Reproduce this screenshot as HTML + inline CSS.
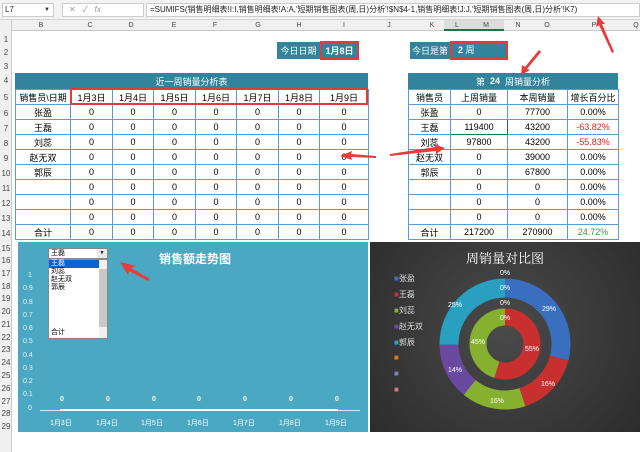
<!DOCTYPE html>
<html><head><meta charset="utf-8"><style>
*{margin:0;padding:0;box-sizing:border-box}
body{width:640px;height:432px;overflow:hidden;background:#fff;position:relative;font-family:"Liberation Sans","Noto Sans CJK SC",sans-serif;font-size:9px;color:#000}
.a{position:absolute}
.c{position:absolute;display:flex;align-items:center;justify-content:center;white-space:nowrap}
table{border-collapse:collapse;position:absolute;table-layout:fixed}
td{border:1px solid #5b9bd5;text-align:center;height:15px;font-size:9px;padding:0;white-space:nowrap;overflow:hidden}
</style></head><body>
<!-- formula bar -->
<div class="a" style="left:0;top:0;width:640px;height:20px;background:#f3f3f3;border-bottom:1px solid #d4d4d4"></div>
<div class="a" style="left:2px;top:3px;width:52px;height:14px;background:#fff;border:1px solid #ccc;font-size:8px;padding-left:2px;line-height:12px;color:#333">L7<span style="position:absolute;right:3px;font-size:6px">▼</span></div>
<div class="a" style="left:62px;top:3px;width:82px;height:14px;background:#fff;border:1px solid #ccc;font-size:8px;color:#999;line-height:12px;padding-left:6px">✕ &nbsp;&nbsp;✓ &nbsp;&nbsp;<i>fx</i></div>
<div class="a" style="left:146px;top:3px;width:494px;height:14px;background:#fff;border:1px solid #ccc;font-size:8px;line-height:12px;padding-left:3px;color:#222;white-space:nowrap;overflow:hidden">=SUMIFS(销售明细表!I:I,销售明细表!A:A,'短期销售图表(周,日)分析'!$N$4-1,销售明细表!J:J,'短期销售图表(周,日)分析'!K7)</div>
<!-- column headers -->
<div class="a" style="left:0;top:20px;width:640px;height:11px;background:#f0f0f0;border-bottom:1px solid #c8c8c8"></div>
<div class="a" style="left:0;top:20px;width:12px;height:432px;background:#f0f0f0;border-right:1px solid #c8c8c8"></div>
<div class="a" style="left:444px;top:20px;width:60px;height:10px;background:#dcdcdc"></div>
<div class="a" style="left:444px;top:29px;width:60px;height:2px;background:#217346"></div>
<div style="font-size:7px;color:#444">
<div class="c" style="left:31px;top:20px;width:20px;height:11px">B</div>
<div class="c" style="left:80px;top:20px;width:20px;height:11px">C</div>
<div class="c" style="left:121px;top:20px;width:20px;height:11px">D</div>
<div class="c" style="left:164px;top:20px;width:20px;height:11px">E</div>
<div class="c" style="left:205px;top:20px;width:20px;height:11px">F</div>
<div class="c" style="left:248px;top:20px;width:20px;height:11px">G</div>
<div class="c" style="left:289px;top:20px;width:20px;height:11px">H</div>
<div class="c" style="left:334px;top:20px;width:20px;height:11px">I</div>
<div class="c" style="left:379px;top:20px;width:20px;height:11px">J</div>
<div class="c" style="left:422px;top:20px;width:20px;height:11px">K</div>
<div class="c" style="left:447px;top:20px;width:20px;height:11px">L</div>
<div class="c" style="left:476px;top:20px;width:20px;height:11px">M</div>
<div class="c" style="left:508px;top:20px;width:20px;height:11px">N</div>
<div class="c" style="left:537px;top:20px;width:20px;height:11px">O</div>
<div class="c" style="left:584px;top:20px;width:20px;height:11px">P</div>
<div class="c" style="left:626px;top:20px;width:20px;height:11px">Q</div>
</div>
<div style="font-size:8px;color:#444">
<div class="c" style="left:0;top:33px;width:12px;height:12px">1</div>
<div class="c" style="left:0;top:46px;width:12px;height:13px">2</div>
<div class="c" style="left:0;top:60px;width:12px;height:12px">3</div>
<div class="c" style="left:0;top:73px;width:12px;height:15px">4</div>
<div class="c" style="left:0;top:90px;width:12px;height:15px">5</div>
<div class="c" style="left:0;top:106px;width:12px;height:15px">6</div>
<div class="c" style="left:0;top:121px;width:12px;height:15px">7</div>
<div class="c" style="left:0;top:136px;width:12px;height:15px">8</div>
<div class="c" style="left:0;top:151px;width:12px;height:15px">9</div>
<div class="c" style="left:0;top:166px;width:12px;height:15px">10</div>
<div class="c" style="left:0;top:181px;width:12px;height:15px">11</div>
<div class="c" style="left:0;top:196px;width:12px;height:15px">12</div>
<div class="c" style="left:0;top:211px;width:12px;height:15px">13</div>
<div class="c" style="left:0;top:226px;width:12px;height:15px">14</div>
<div class="c" style="left:0;top:242px;width:12px;height:12px">15</div>
<div class="c" style="left:0;top:254px;width:12px;height:12px">16</div>
<div class="c" style="left:0;top:267px;width:12px;height:12px">17</div>
<div class="c" style="left:0;top:280px;width:12px;height:12px">18</div>
<div class="c" style="left:0;top:292px;width:12px;height:12px">19</div>
<div class="c" style="left:0;top:305px;width:12px;height:12px">20</div>
<div class="c" style="left:0;top:318px;width:12px;height:12px">21</div>
<div class="c" style="left:0;top:331px;width:12px;height:12px">22</div>
<div class="c" style="left:0;top:343px;width:12px;height:12px">23</div>
<div class="c" style="left:0;top:356px;width:12px;height:12px">24</div>
<div class="c" style="left:0;top:369px;width:12px;height:12px">25</div>
<div class="c" style="left:0;top:382px;width:12px;height:12px">26</div>
<div class="c" style="left:0;top:395px;width:12px;height:12px">27</div>
<div class="c" style="left:0;top:407px;width:12px;height:12px">28</div>
<div class="c" style="left:0;top:420px;width:12px;height:12px">29</div>
</div>
<!-- date boxes -->
<div class="c" style="left:277px;top:42px;width:43px;height:17px;background:#31849b;color:#fff;font-size:9px">今日日期</div>
<div class="c" style="left:320px;top:41px;width:39px;height:19px;background:#31849b;border:2px solid #e03c3c;color:#fff;font-weight:bold;font-size:9px">1月8日</div>
<div class="c" style="left:410px;top:42px;width:40px;height:17px;background:#31849b;color:#fff;font-size:9px">今日是第</div>
<div class="a" style="left:450px;top:41px;width:58px;height:19px;background:#31849b;border:2px solid #e03c3c;color:#fff;font-size:9px;line-height:15px;padding-left:6px"><b>2</b> 周</div>
<!-- table 1 -->
<div class="c" style="left:15px;top:73px;width:353px;height:16px;background:#31849b;color:#fff;font-size:9px">近一周销量分析表</div>
<table style="left:15px;top:89px;width:353px">
<colgroup><col style="width:55px"><col style="width:42px"><col style="width:41px"><col style="width:42px"><col style="width:41px"><col style="width:42px"><col style="width:41px"><col style="width:49px"></colgroup>
<tr><td>销售员\日期</td><td>1月3日</td><td>1月4日</td><td>1月5日</td><td>1月6日</td><td>1月7日</td><td>1月8日</td><td>1月9日</td></tr>
<tr><td>张盈</td><td>0</td><td>0</td><td>0</td><td>0</td><td>0</td><td>0</td><td>0</td></tr>
<tr><td>王磊</td><td>0</td><td>0</td><td>0</td><td>0</td><td>0</td><td>0</td><td>0</td></tr>
<tr><td>刘蕊</td><td>0</td><td>0</td><td>0</td><td>0</td><td>0</td><td>0</td><td>0</td></tr>
<tr><td>赵无双</td><td>0</td><td>0</td><td>0</td><td>0</td><td>0</td><td>0</td><td>0</td></tr>
<tr><td>郭辰</td><td>0</td><td>0</td><td>0</td><td>0</td><td>0</td><td>0</td><td>0</td></tr>
<tr><td></td><td>0</td><td>0</td><td>0</td><td>0</td><td>0</td><td>0</td><td>0</td></tr>
<tr><td></td><td>0</td><td>0</td><td>0</td><td>0</td><td>0</td><td>0</td><td>0</td></tr>
<tr><td></td><td>0</td><td>0</td><td>0</td><td>0</td><td>0</td><td>0</td><td>0</td></tr>
<tr><td>合计</td><td>0</td><td>0</td><td>0</td><td>0</td><td>0</td><td>0</td><td>0</td></tr>
</table>
<div class="a" style="left:70px;top:88px;width:298px;height:17px;border:2px solid #e03c3c"></div>
<!-- table 2 -->
<div class="c" style="left:408px;top:73px;width:210px;height:16px;background:#31849b;color:#fff;font-size:9px">第 &nbsp;<b>24</b>&nbsp; 周销量分析</div>
<table style="left:408px;top:89px;width:210px">
<colgroup><col style="width:42px"><col style="width:57px"><col style="width:60px"><col style="width:51px"></colgroup>
<tr><td>销售员</td><td>上周销量</td><td>本周销量</td><td>增长百分比</td></tr>
<tr><td>张盈</td><td>0</td><td>77700</td><td>0.00%</td></tr>
<tr><td>王磊</td><td style="border:1px solid #217346">119400</td><td>43200</td><td style="color:#e02020">-63.82%</td></tr>
<tr><td>刘蕊</td><td>97800</td><td>43200</td><td style="color:#e02020">-55.83%</td></tr>
<tr><td>赵无双</td><td>0</td><td>39000</td><td>0.00%</td></tr>
<tr><td>郭辰</td><td>0</td><td>67800</td><td>0.00%</td></tr>
<tr><td></td><td>0</td><td>0</td><td>0.00%</td></tr>
<tr><td></td><td>0</td><td>0</td><td>0.00%</td></tr>
<tr><td></td><td>0</td><td>0</td><td>0.00%</td></tr>
<tr><td>合计</td><td>217200</td><td>270900</td><td style="color:#27a050">24.72%</td></tr>
</table>
<!-- line chart -->
<div class="a" style="left:18px;top:242px;width:350px;height:190px;background:#4aa8c2"></div>
<div class="c" style="left:150px;top:250px;width:90px;height:16px;color:#fff;font-weight:bold;font-size:12px">销售额走势图</div>
<div style="color:#e8f4f8;font-size:7px">
<div class="a" style="left:28px;top:272px">1</div>
<div class="a" style="left:23px;top:285px">0.9</div>
<div class="a" style="left:23px;top:299px">0.8</div>
<div class="a" style="left:23px;top:312px">0.7</div>
<div class="a" style="left:23px;top:325px">0.6</div>
<div class="a" style="left:23px;top:338px">0.5</div>
<div class="a" style="left:23px;top:352px">0.4</div>
<div class="a" style="left:23px;top:365px">0.3</div>
<div class="a" style="left:23px;top:378px">0.2</div>
<div class="a" style="left:23px;top:391px">0.1</div>
<div class="a" style="left:28px;top:405px">0</div>
</div>
<div class="a" style="left:40px;top:410px;width:320px;height:1px;background:#d0eaf2"></div>
<div class="a" style="left:60px;top:409px;width:278px;height:2px;background:#fff"></div>
<div style="color:#fff;font-size:7px;font-weight:bold">
<div class="a" style="left:60px;top:396px">0</div><div class="a" style="left:106px;top:396px">0</div><div class="a" style="left:152px;top:396px">0</div><div class="a" style="left:197px;top:396px">0</div><div class="a" style="left:243px;top:396px">0</div><div class="a" style="left:289px;top:396px">0</div><div class="a" style="left:335px;top:396px">0</div>
</div>
<div style="color:#fff;font-size:7px">
<div class="a" style="left:50px;top:418px">1月3日</div><div class="a" style="left:96px;top:418px">1月4日</div><div class="a" style="left:141px;top:418px">1月5日</div><div class="a" style="left:187px;top:418px">1月6日</div><div class="a" style="left:233px;top:418px">1月7日</div><div class="a" style="left:279px;top:418px">1月8日</div><div class="a" style="left:325px;top:418px">1月9日</div>
</div>
<!-- dropdown -->
<div class="a" style="left:48px;top:248px;width:60px;height:11px;background:#fff;border:1px solid #888;font-size:7px;line-height:9px;padding-left:2px">王磊<span class="a" style="right:0;top:0;width:10px;height:9px;background:#e8e8e8;font-size:5px;text-align:center">▼</span></div>
<div class="a" style="left:48px;top:259px;width:60px;height:80px;background:#fff;border:1px solid #888;font-size:7px;line-height:8px">
<div style="background:#0a64d2;color:#fff;width:51px;padding-left:2px">王磊</div>
<div style="padding-left:2px">刘蕊</div><div style="padding-left:2px">赵无双</div><div style="padding-left:2px">郭辰</div>
<div class="a" style="left:2px;bottom:1px">合计</div>
<div class="a" style="right:0;top:0;width:8px;height:78px;background:#f0f0f0"><div style="margin-top:9px;height:58px;background:#c8c8c8"></div></div>
</div>
<!-- red arrows -->
<svg class="a" style="left:0;top:0" width="640" height="432">
<g fill="#e83a3a">
<polygon points="120,262 136,266 131,268 150,279 148,281 129,271 128,275"/>
<polygon points="340,156 352,151 351,154 376,156 376,158 351,157 352,160"/>
<polygon points="598,16 605,24 602,24 614,52 612,53 599,25 596,27"/>
<polygon points="521,75 522,65 525,67 539,50 541,52 527,69 530,70"/>
<polygon points="445,148 434,144 435,147 390,154 390,156 436,151 436,154"/>
</g>
</svg>
<!-- donut chart -->
<div class="a" style="left:370px;top:242px;width:270px;height:190px;background:radial-gradient(circle at 50% 45%,#4a4a4a,#2c2c2c)"></div>
<div class="c" style="left:440px;top:248px;width:130px;height:18px;color:#fff;font-size:13px;font-family:'Liberation Serif','Noto Serif CJK SC',serif">周销量对比图</div>
<div style="color:#ddd;font-size:8px">
<div class="a" style="left:394px;top:273px"><span style="color:#3a6fc0">■</span>张盈</div>
<div class="a" style="left:394px;top:289px"><span style="color:#c83030">■</span>王磊</div>
<div class="a" style="left:394px;top:305px"><span style="color:#86b030">■</span>刘蕊</div>
<div class="a" style="left:394px;top:321px"><span style="color:#6a4aa0">■</span>赵无双</div>
<div class="a" style="left:394px;top:337px"><span style="color:#2aa0c0">■</span>郭辰</div>
<div class="a" style="left:394px;top:353px;color:#e07a20">■</div>
<div class="a" style="left:394px;top:369px;color:#6a8ab0">■</div>
<div class="a" style="left:394px;top:385px;color:#d08070">■</div>
</div>
<svg class="a" style="left:0;top:0" width="640" height="432">
<g transform="translate(505,344) rotate(-90)" fill="none">
<circle r="56" stroke="#3a6fc0" stroke-width="19" stroke-dasharray="102 400" stroke-dashoffset="0"/>
<circle r="56" stroke="#c83030" stroke-width="19" stroke-dasharray="56 400" stroke-dashoffset="-102"/>
<circle r="56" stroke="#86b030" stroke-width="19" stroke-dasharray="56 400" stroke-dashoffset="-158"/>
<circle r="56" stroke="#6a4aa0" stroke-width="19" stroke-dasharray="49 400" stroke-dashoffset="-214"/>
<circle r="56" stroke="#2aa0c0" stroke-width="19" stroke-dasharray="89 400" stroke-dashoffset="-263"/>
<circle r="27" stroke="#c83030" stroke-width="17" stroke-dasharray="93 400"/>
<circle r="27" stroke="#86b030" stroke-width="17" stroke-dasharray="77 400" stroke-dashoffset="-93"/>
</g>
<g fill="#fff" font-size="7" font-family="Liberation Sans" text-anchor="middle">
<text x="505" y="275">0%</text><text x="505" y="290">0%</text><text x="505" y="305">0%</text><text x="505" y="320">0%</text>
<text x="549" y="311">29%</text><text x="455" y="307">25%</text><text x="478" y="344">45%</text><text x="532" y="351">55%</text>
<text x="455" y="372">14%</text><text x="548" y="386">16%</text><text x="497" y="403">16%</text>
</g>
</svg>
</body></html>
